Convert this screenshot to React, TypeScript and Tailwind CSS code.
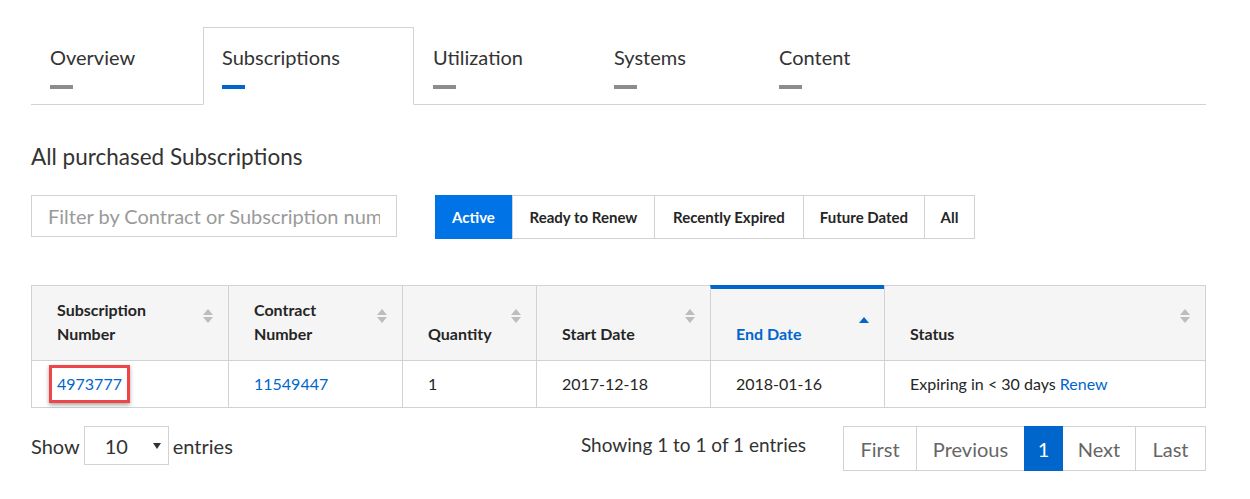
import { useState } from "react";

const tabs = [
  { label: "Overview", width: "w-[172px]" },
  { label: "Subscriptions", width: "w-[211px]" },
  { label: "Utilization", width: "w-[181px]" },
  { label: "Systems", width: "w-[165px]" },
  { label: "Content", width: "w-[165px]" },
];

const filters = [
  { label: "Active", width: "w-[77px]" },
  { label: "Ready to Renew", width: "w-[142px]" },
  { label: "Recently Expired", width: "w-[149px]" },
  { label: "Future Dated", width: "w-[121px]" },
  { label: "All", width: "w-[50px]" },
];

const columns = [
  { label: ["Subscription", "Number"], width: "w-[196px]", sort: "both" },
  { label: ["Contract", "Number"], width: "w-[174px]", sort: "both" },
  { label: ["Quantity"], width: "w-[134px]", sort: "both" },
  { label: ["Start Date"], width: "w-[174px]", sort: "both" },
  { label: ["End Date"], width: "w-[174px]", sort: "asc" },
  { label: ["Status"], width: "flex-1", sort: "both" },
] as const;

function SortIcon({ mode }: { mode: "both" | "asc" }) {
  if (mode === "asc") {
    return (
      <svg width="12" height="8" viewBox="0 0 12 8" className="shrink-0">
        <path d="M6 1 L11 7 H1 Z" fill="#0066cc" />
      </svg>
    );
  }
  return (
    <svg width="12" height="16" viewBox="0 0 12 16" className="shrink-0">
      <path d="M6 1 L11 7 H1 Z" fill="#bdbdbd" />
      <path d="M6 15 L11 9 H1 Z" fill="#bdbdbd" />
    </svg>
  );
}

export default function App() {
  const [activeTab] = useState("Subscriptions");
  const [activeFilter, setActiveFilter] = useState("Active");

  return (
    <div className="min-h-[499px] w-[1250px] bg-white text-[#252525]" style={{ fontFamily: "Lato, 'Open Sans', sans-serif" }}>
      <div className="w-[1175px] ml-[31px] pt-[27px]">
        {/* tabs */}
        <div className="flex border-b border-[#d2d2d2]">
          {tabs.map((tab) => {
            const active = tab.label === activeTab;
            return (
              <div
                key={tab.label}
                className={`${tab.width} -mb-px flex h-[78px] flex-col pl-[18px] pt-[17px] border ${
                  active ? "border-[#d2d2d2] border-b-white bg-white" : "border-transparent"
                }`}
              >
                <span className="text-[20px] leading-6 text-[#333]">{tab.label}</span>
                <span className={`mt-[16px] h-1 w-[23px] ${active ? "bg-[#0066cc]" : "bg-[#8c8c8c]"}`} />
              </div>
            );
          })}
        </div>

        <h2 className="mt-[39px] text-[22.5px] leading-[26px] text-[#333]">All purchased Subscriptions</h2>

        {/* filters */}
        <div className="mt-[25px] flex items-start gap-[38px]">
          <input
            className="h-[42px] w-[366px] border border-[#d2d2d2] px-4 text-[20px] text-[#333] placeholder:text-[#9a9a9a] outline-none"
            placeholder="Filter by Contract or Subscription number"
          />
          <div className="flex h-[44px] border border-[#d2d2d2]">
            {filters.map((f, i) => {
              const active = f.label === activeFilter;
              return (
                <button
                  key={f.label}
                  type="button"
                  onClick={() => setActiveFilter(f.label)}
                  className={`${f.width} text-[15px] font-bold ${i > 0 ? "border-l border-[#d2d2d2]" : ""} ${
                    active ? "bg-[#0073e6] text-white -my-px -ml-px h-[44px]" : "h-full bg-white text-[#252525]"
                  }`}
                >
                  {f.label}
                </button>
              );
            })}
          </div>
        </div>

        {/* table */}
        <div className="mt-[46px] border border-[#d2d2d2]">
          <div className="flex h-[75px] bg-[#f5f5f5] border-b border-[#d2d2d2]">
            {columns.map((col, i) => {
              const sorted = col.sort === "asc";
              return (
                <div
                  key={col.label.join(" ")}
                  className={`${col.width} flex items-end justify-between pl-[25px] pr-[14px] pb-[14px] ${
                    i > 0 ? "border-l border-[#d2d2d2]" : ""
                  } ${sorted ? "border-t-4 border-t-[#0066cc] -mt-px" : ""}`}
                >
                  <div className={`text-[16px] font-bold leading-6 ${sorted ? "text-[#0066cc]" : "text-[#252525]"}`}>
                    {col.label.map((l) => (
                      <div key={l}>{l}</div>
                    ))}
                  </div>
                  <div className={`self-center ${sorted ? "mb-[-4px]" : "mt-[-1px]"}`}>
                    <SortIcon mode={col.sort} />
                  </div>
                </div>
              );
            })}
          </div>
          <div className="flex h-[46px] items-center text-[16px]">
            <div className="w-[196px] h-full flex items-center pl-[25px]">
              <span className="relative text-[#0066cc]">
                4973777
                <span className="absolute -inset-x-[8px] -inset-y-[7px] border-[3px] border-[#ef4448] shadow-[0_2px_4px_rgba(0,0,0,0.35)]" />
              </span>
            </div>
            <div className="w-[174px] h-full flex items-center pl-[25px] border-l border-[#d2d2d2] text-[#0066cc]">11549447</div>
            <div className="w-[134px] h-full flex items-center pl-[25px] border-l border-[#d2d2d2]">1</div>
            <div className="w-[174px] h-full flex items-center pl-[25px] border-l border-[#d2d2d2]">2017-12-18</div>
            <div className="w-[174px] h-full flex items-center pl-[25px] border-l border-[#d2d2d2]">2018-01-16</div>
            <div className="flex-1 h-full flex items-center pl-[25px] border-l border-[#d2d2d2]">
              Expiring in &lt; 30 days&nbsp;<span className="text-[#0066cc]">Renew</span>
            </div>
          </div>
        </div>

        {/* footer */}
        <div className="mt-[18px] flex items-start justify-between text-[20px] text-[#333]">
          <div className="flex items-center h-[39px] gap-[4px]">
            <span>Show</span>
            <div className="flex h-[39px] w-[85px] items-center justify-between border border-[#d2d2d2] pl-[20px] pr-[7px]">
              <span>10</span>
              <svg width="8" height="6" viewBox="0 0 8 6">
                <path d="M0 0 H8 L4 6 Z" fill="#333" />
              </svg>
            </div>
            <span>entries</span>
          </div>
          <div className="flex items-start gap-[37px]">
            <span className="mt-[7px] text-[19px] leading-6">Showing 1 to 1 of 1 entries</span>
            <div className="flex h-[45px] border border-[#d2d2d2] text-[#666]">
              <span className="flex w-[72px] items-center justify-center">First</span>
              <span className="flex w-[108px] items-center justify-center border-l border-[#d2d2d2]">Previous</span>
              <span className="flex w-[39px] items-center justify-center bg-[#0066cc] text-white -my-px">1</span>
              <span className="flex w-[72px] items-center justify-center">Next</span>
              <span className="flex w-[70px] items-center justify-center border-l border-[#d2d2d2]">Last</span>
            </div>
          </div>
        </div>
      </div>
    </div>
  );
}
